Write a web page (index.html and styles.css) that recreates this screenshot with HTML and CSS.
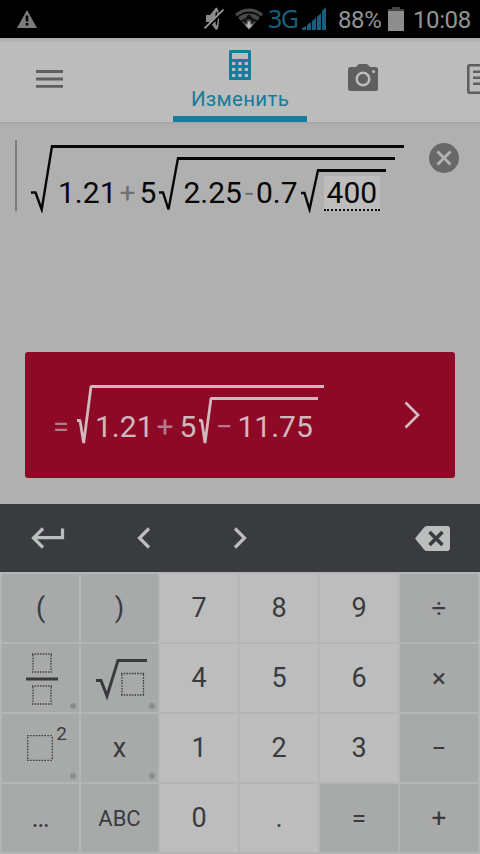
FILE: index.html
```html
<!DOCTYPE html>
<html lang="ru">
<head>
    <meta charset="UTF-8"/>
    <meta content="width=device-width, initial-scale=1.0" name="viewport"/>
    <title>Калькулятор</title>
    <link rel="stylesheet" href="styles.css">
</head>
<body>
<div class="status-bar">
    <svg class="status-warning" width="20" height="18" viewBox="0 0 20 18">
        <path d="M10 0L20 18H0z" fill="#7c7c7c"/>
        <path d="M8.700 5.500h2.600v6H8.700zM8.700 13h2.600v2.500H8.700z" fill="#000"/>
    </svg>
    <svg class="status-mute" width="20" height="24" viewBox="0 0 20 24">
        <path d="M2 8h4l6-7.500c2 0 3 4 3 11S14 23 12 23L6 15H2z" fill="#8b8b8b"/>
        <ellipse cx="12.500" cy="11.500" rx="1.200" ry="7" fill="#000"/>
        <path d="M0 23L20 4" stroke="#000" stroke-width="3"/>
        <path d="M.5 21.500L19.500 2.500" stroke="#a0a0a0" stroke-width="1.700"/>
    </svg>
    <svg class="status-wifi" width="28" height="22" viewBox="0 0 28 22">
        <path d="M0 6C8-1.500 20-1.500 28 6L14 22z" fill="#484848"/>
        <path d="M2.500 9C9 3 19 3 25.500 9M6 13.500c5-4 11-4 16 0" fill="none" stroke="#000" stroke-width="1.300"/>
        <path d="M14 6l3.500 4h-7zM8 13l3.500-2.500v5zM20 13l-3.500-2.500v5z" fill="#111"/>
        <path d="M10 16.500h2.700v-3h2.600v3H18l-4 4.500z" fill="#b5b5b5"/>
    </svg>
    <span class="status-network">3G</span>
    <svg class="status-signal" width="24" height="23" viewBox="0 0 24 23">
        <path d="M0 23v-2l4-2v4zM5 23v-5l4-3v8zM10 23v-9l4-3.500V23zM15 23V10l4-4v17zM20 23V4l4-4v23z" fill="#175f7c"/>
    </svg>
    <span class="status-percent">88%</span>
    <svg class="status-battery" width="16" height="24" viewBox="0 0 16 24">
        <path d="M4 0h8v2h4v2H0V2h4z" fill="#454545"/>
        <path d="M0 4h16v20H0z" fill="#8d8d8d"/>
    </svg>
    <span class="status-time">10:08</span>
</div>

<div class="header">
    <div class="menu">
        <svg width="27" height="18" viewBox="0 0 27 18">
            <path d="M0 1.500h27M0 9h27M0 16.300h27" stroke="#5f5f5f" stroke-width="2.800"/>
        </svg>
    </div>
    <div class="tab tab-active">
        <svg width="22" height="30" viewBox="0 0 22 30">
            <rect width="22" height="30" rx="1.500" fill="#177c9b"/>
            <path d="M3 3h16v6H3zM3 12h3.300v3H3zM9.300 12h3.400v3H9.300zM15.700 12H19v3h-3.300zM3 18h3.300v3H3zM9.300 18h3.400v3H9.300zM15.700 18H19v3h-3.300zM3 24h3.300v3H3zM9.300 24h3.400v3H9.300zM15.700 24H19v3h-3.300z" fill="#bcbcbc"/>
        </svg>
        <span class="tab-label">Изменить</span>
    </div>
    <div class="tab tab-camera">
        <svg width="30" height="27" viewBox="0 0 30 27">
            <path d="M2.500 3H8l2-2.300Q10.500 0 11.500 0h7q1 0 1.500.7L22 3h5.500Q30 3 30 5.500v19q0 2.500-2.500 2.500h-25Q0 27 0 24.500v-19Q0 3 2.500 3z" fill="#5f5f5f"/>
            <circle cx="15" cy="15" r="6.300" fill="none" stroke="#bcbcbc" stroke-width="2.500"/>
            <circle cx="25.500" cy="7.500" r="1.600" fill="#bcbcbc"/>
        </svg>
    </div>
    <div class="tab tab-notes">
        <svg width="30" height="30" viewBox="0 0 30 30">
            <rect x="1.300" y="1.300" width="27.400" height="27.400" rx="1" fill="none" stroke="#5f5f5f" stroke-width="2.600"/>
            <path d="M6 7.700h18M6 13.700h18M6 19.700h18" stroke="#5f5f5f" stroke-width="2.600"/>
        </svg>
    </div>
</div>

<div class="workspace">
    <div class="editor">
        <div class="cursor"></div>
        <div class="formula">
            <svg class="root" width="22" height="68" viewBox="0 0 22 68">
                <path d="M0 47.500h4.500L10.700 64.500 21 1.200h1" fill="none" stroke="#070707" stroke-width="2.400"/>
            </svg>
            <div class="radicand radicand-outer">
                <span class="number-first">1.21</span>
                <span class="operator-plus">+</span>
                <span class="factor">5</span>
                <svg class="root" width="20" height="56" viewBox="0 0 20 56">
                    <path d="M0 35.500h4L9.500 52.500 19 1.200h1" fill="none" stroke="#070707" stroke-width="2.400"/>
                </svg>
                <div class="radicand radicand-middle">
                    <span>2.25</span>
                    <span class="operator-minus">-</span>
                    <span>0.7</span>
                    <svg class="root root-inner" width="18" height="44" viewBox="0 0 18 44">
                        <path d="M0 24h3.500l5 16.500L17 1.200h1" fill="none" stroke="#070707" stroke-width="2.400"/>
                    </svg>
                    <div class="radicand radicand-inner">
                        <span class="selected">400</span>
                    </div>
                </div>
            </div>
        </div>
        <svg class="clear" width="30" height="30" viewBox="0 0 30 30">
            <circle cx="15" cy="15" r="15" fill="#686868"/>
            <path d="M8.500 8.500l13 13M21.500 8.500l-13 13" stroke="#b4b4b4" stroke-width="2.800"/>
        </svg>
    </div>

    <div class="result">
        <span class="result-equals">=</span>
        <svg class="root" width="15" height="62" viewBox="0 0 15 62">
            <path d="M0 35.500h3L6.700 58 14 1.500h1M5.500 50l1.200 8" fill="none" stroke="#cfb9be" stroke-width="2.800" stroke-linejoin="bevel"/>
        </svg>
        <div class="radicand result-outer">
            <span>1.21</span>
            <span class="result-plus">+</span>
            <span class="result-factor">5</span>
            <svg class="root" width="13" height="50" viewBox="0 0 13 50">
                <path d="M0 23.500h2.700L6 46 12 1.500h1" fill="none" stroke="#cfb9be" stroke-width="2.800" stroke-linejoin="bevel"/>
            </svg>
            <div class="radicand result-inner">
                <span class="result-minus">−</span>
                <span>11.75</span>
            </div>
        </div>
        <svg class="result-arrow" width="17" height="28" viewBox="0 0 17 28">
            <path d="M1.500 1.500L14 14 1.500 26.500" fill="none" stroke="#d0bcc1" stroke-width="2.700"/>
        </svg>
    </div>
</div>

<div class="toolbar">
    <div class="tool tool-enter">
        <svg width="34" height="22" viewBox="0 0 34 22">
            <path d="M12 1.500L2.500 11l9.500 9.500M3 10.700h28.500V1.500" fill="none" stroke="#bcbdbd" stroke-width="3.200"/>
        </svg>
    </div>
    <div class="tool">
        <svg width="14" height="22" viewBox="0 0 14 22">
            <path d="M12 1.500L2.500 11l9.500 9.500" fill="none" stroke="#bcbdbd" stroke-width="3.200"/>
        </svg>
    </div>
    <div class="tool">
        <svg width="14" height="22" viewBox="0 0 14 22">
            <path d="M2 1.500L11.500 11 2 20.500" fill="none" stroke="#bcbdbd" stroke-width="3.200"/>
        </svg>
    </div>
    <div class="tool tool-backspace">
        <svg width="35" height="25" viewBox="0 0 35 25">
            <path d="M9 1.500Q10 0 12 0h20q3 0 3 3v19q0 3-3 3H12q-2 0-3-1.500L0 12.500z" fill="#bcbdbd"/>
            <path d="M14.500 6l13 13M27.500 6l-13 13" stroke="#3a3b3e" stroke-width="3.600"/>
        </svg>
    </div>
</div>

<div class="keyboard">
    <div class="key key-dark">(</div>
    <div class="key key-dark">)</div>
    <div class="key">7</div>
    <div class="key">8</div>
    <div class="key">9</div>
    <div class="key key-dark key-operator">÷</div>

    <div class="key key-dark key-more key-template">
        <svg width="32" height="52" viewBox="0 0 32 52">
            <path d="M6 1h20M6 19h20M6 33h20M6 51h20M7 2v16M25 2v16M7 34v16M25 34v16" stroke="#3a3b3e" stroke-width="1.300" stroke-dasharray="1.500 1.200"/>
            <path d="M0 26h32" stroke="#3a3b3e" stroke-width="3"/>
        </svg>
    </div>
    <div class="key key-dark key-more key-template">
        <svg width="51" height="42" viewBox="0 0 51 42">
            <path d="M0 22.500h5L11 38 22 2.500h29" fill="none" stroke="#3a3b3e" stroke-width="3"/>
            <path d="M25 15.500h23M25 37h23M26 16.500v20M47.500 16.500v20" stroke="#3a3b3e" stroke-width="1.300" stroke-dasharray="1.500 1.200"/>
        </svg>
    </div>
    <div class="key">4</div>
    <div class="key">5</div>
    <div class="key">6</div>
    <div class="key key-dark key-operator">×</div>

    <div class="key key-dark key-more key-power">
        <svg width="26" height="26" viewBox="0 0 26 26">
            <path d="M0 .7h26M0 25.300h26M.7 2v22M25.300 2v22" stroke="#3a3b3e" stroke-width="1.300" stroke-dasharray="1.600 1.300"/>
        </svg>
        <sup>2</sup>
    </div>
    <div class="key key-dark key-more">x</div>
    <div class="key">1</div>
    <div class="key">2</div>
    <div class="key">3</div>
    <div class="key key-dark key-operator">−</div>

    <div class="key key-dark">…</div>
    <div class="key key-dark key-letters">ABC</div>
    <div class="key">0</div>
    <div class="key">.</div>
    <div class="key key-dark key-operator">=</div>
    <div class="key key-dark key-operator">+</div>
</div>
</body>
</html>
```
FILE: styles.css
```css
/* Base styles */
* {
    box-sizing: border-box;
}

body {
    margin: 0;
    width: 480px;
    height: 854px;
    display: flex;
    flex-direction: column;
    overflow: hidden;
    background-color: #b0b0b0;
    font-family: Roboto, "Noto Sans", sans-serif;
}

svg {
    display: block;
    flex: none;
}

/* Status bar */
.status-bar {
    height: 38px;
    flex: none;
    display: flex;
    align-items: center;
    padding-left: 17px;
    background-color: #000;
    color: #949494;
    font-size: 24px;
    line-height: 38px;
}

.status-mute {
    margin-left: 167px;
}

.status-wifi {
    margin-left: 11px;
}

.status-network {
    width: 30px;
    margin: -2px 0 0 5px;
    color: #175f7c;
    font-family: "Noto Sans", sans-serif;
    font-size: 25px;
    letter-spacing: -1.5px;
}

.status-signal {
    margin: -2px 0 0 4px;
}

.status-percent {
    width: 43px;
    margin: 1px 0 0 12px;
    letter-spacing: -0.4px;
}

.status-battery {
    margin: -1px 0 0 7px;
}

.status-time {
    margin: 1px 0 0 9px;
    letter-spacing: -0.4px;
}

/* Header with tabs */
.header {
    height: 85px;
    flex: none;
    display: flex;
    overflow: hidden;
    background: linear-gradient(#aaa, #bcbcbc 5px);
    border-bottom: 1px solid #a2a2a2;
}

.menu {
    width: 173px;
    flex: none;
    padding: 32px 0 0 36px;
}

.tab {
    flex: none;
    display: flex;
    flex-direction: column;
    align-items: center;
}

.tab-active {
    width: 134px;
    padding-top: 12px;
    border-bottom: 6px solid #177c9b;
}

.tab-label {
    margin-top: 7px;
    color: #177c9b;
    font-size: 20.5px;
    line-height: 24px;
    letter-spacing: 0.3px;
}

.tab-camera {
    width: 112px;
    padding-top: 26px;
}

.tab-notes {
    width: 126px;
    padding-top: 26px;
}

/* Editor and result */
.workspace {
    height: 381px;
    flex: none;
    padding: 17px 25px 0;
    background: linear-gradient(#aaa, #b0b0b0 5px);
}

.editor {
    height: 212px;
    display: flex;
    align-items: flex-start;
    margin: 0 -10px;
}

.cursor {
    width: 2px;
    height: 71px;
    background-color: #7b7b7b;
}

.formula {
    width: 387px;
    display: flex;
    align-items: flex-end;
    margin: 5px 0 0 14px;
    color: #070707;
    font-size: 30px;
    line-height: 40px;
}

.radicand {
    display: flex;
    align-items: flex-end;
    flex: none;
    border-top: 3px solid #070707;
}

.radicand-outer {
    width: 351px;
    height: 68px;
    padding-left: 5px;
}

.operator-plus {
    width: 17px;
    margin-left: 3px;
    color: #707070;
    font-size: 28px;
}

.factor {
    margin: 0 3px 0 3px;
}

.radicand-middle {
    width: 216px;
    height: 56px;
    padding-left: 4px;
}

.operator-minus {
    width: 11px;
    margin-left: 3px;
    color: #707070;
}

.root-inner {
    margin-left: 3px;
}

.radicand-inner {
    width: 67px;
    height: 44px;
    padding-left: 5px;
}

.selected {
    width: 56px;
    height: 35px;
    margin-bottom: 2px;
    padding-left: 3px;
    background-color: #bdbdbd;
    border-bottom: 2px dotted #070707;
    line-height: 33px;
}

.clear {
    margin: 3px 0 0 11px;
}

.result {
    height: 126px;
    display: flex;
    align-items: flex-end;
    padding: 0 34px 31px 28px;
    border-radius: 3px;
    background-color: #8d0926;
    color: #cfb9be;
    font-size: 30px;
    line-height: 40px;
}

.result-equals {
    width: 24px;
    color: #b5788a;
    font-size: 29px;
}

.result-outer {
    width: 232px;
    height: 62px;
    padding-left: 3px;
    border-color: #cfb9be;
}

.result-plus {
    margin-left: 3px;
    color: #b5788a;
}

.result-factor {
    margin: 0 3px 0 6px;
}

.result-inner {
    width: 106px;
    height: 50px;
    padding-left: 3px;
    border-color: #cfb9be;
}

.result-minus {
    width: 22px;
    color: #b5788a;
}

.result-arrow {
    margin: 0 0 18px auto;
}

/* Input toolbar */
.toolbar {
    height: 68px;
    flex: none;
    display: flex;
    align-items: center;
    background-color: #3a3b3e;
}

.tool {
    width: 96px;
    display: flex;
    justify-content: center;
}

.tool-backspace {
    margin-left: auto;
}

/* Keyboard */
.keyboard {
    height: 282px;
    flex: none;
    display: grid;
    grid-template-columns: 77px 77px 78px 78px 78px 78px;
    grid-template-rows: repeat(4, 68px);
    gap: 2px;
    padding: 2px;
    background-color: #b4b5b5;
}

.key {
    position: relative;
    display: flex;
    align-items: center;
    justify-content: center;
    background-color: #bdbdbd;
    color: #3a3b3e;
    font-size: 27px;
}

.key-dark {
    background-color: #a8aaaa;
}

.key-operator {
    font-size: 26px;
}

.key-letters {
    font-size: 22px;
}

.key-template {
    padding: 2px 0 0 3px;
}

.key-power {
    gap: 3px;
    padding-left: 13px;
}

.key-power sup {
    margin-top: -29px;
    font-size: 19px;
    line-height: 22px;
}

/* Corner mark on keys with a long-press menu */
.key-more::after {
    content: "";
    position: absolute;
    right: 3px;
    bottom: 3px;
    width: 6px;
    height: 6px;
    border-radius: 50%;
    background-color: #8c8d8d;
}
```
